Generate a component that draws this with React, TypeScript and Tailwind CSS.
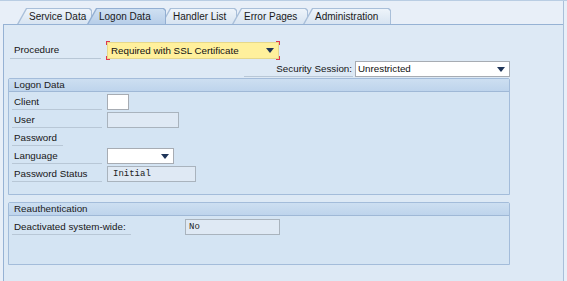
const tabs = ["Service Data", "Logon Data", "Handler List", "Error Pages", "Administration"];
const tabWidths = [75, 79, 76, 76, 88];

function Arrow() {
  return (
    <svg width="8" height="5" viewBox="0 0 8 5" className="shrink-0">
      <path d="M0 0h8L4 5z" fill="#1f3559" />
    </svg>
  );
}

function Tab({ label, width, active }: { label: string; width: number; active: boolean }) {
  const shape = "polygon(9px 0, calc(100% - 2px) 0, 100% 2px, 100% 100%, 0 100%)";
  return (
    <div
      className={`relative -ml-[5px] first:ml-0 h-[16px] ${active ? "z-10 bg-[#93afd2]" : "bg-[#a9bfd9]"}`}
      style={{ width, clipPath: shape }}
    >
      <div
        className={`h-full mx-[1px] mt-[1px] flex items-center pl-[11px] ${
          active ? "bg-gradient-to-b from-[#cfe0f2] to-[#b6cde8]" : "bg-gradient-to-b from-[#eef4fa] to-[#d6e3f1]"
        }`}
        style={{ clipPath: shape }}
      >
        <span className="text-[10px] text-[#1a1a1a] leading-none">{label}</span>
      </div>
    </div>
  );
}

function Label({ text, w = 90, line = true }: { text: string; w?: number; line?: boolean }) {
  return (
    <div
      className={`h-full flex items-center pl-[2px] shrink-0 ${line ? "border-b border-[#b8c7d6]" : ""}`}
      style={{ width: w }}
    >
      <span className="text-[9.8px] text-[#161616] leading-none">{text}</span>
    </div>
  );
}

function Corner({ pos }: { pos: string }) {
  return <span className={`absolute w-[4px] h-[4px] border-[#e0374f] ${pos}`} />;
}

function Group({ title, children, className }: { title: string; children: React.ReactNode; className?: string }) {
  return (
    <div className={`ml-[4px] w-[502px] border border-[#a3bcda] rounded-t-[2px] bg-[#d4e4f3] ${className ?? ""}`}>
      <div className="h-[13px] bg-gradient-to-b from-[#cddff1] to-[#bed4ec] border-b border-[#9fb8d6] flex items-center pl-[5px]">
        <span className="text-[9.8px] text-[#1a1a1a] leading-none">{title}</span>
      </div>
      {children}
    </div>
  );
}

export default function App() {
  return (
    <div
      className="w-[567px] h-[281px] overflow-hidden bg-[#e8eff8] border-t border-[#b9cde3]"
      style={{ fontFamily: '"Liberation Sans", Arial, sans-serif' }}
    >
      <div className="w-[564px] h-full border-r border-[#a9bfd9] flex flex-col">
        {/* tab strip */}
        <div className="h-[23px] flex items-end pl-[17px] pt-[7px]">
          {tabs.map((t, i) => (
            <Tab key={t} label={t} width={tabWidths[i]} active={i === 1} />
          ))}
        </div>

        {/* panel */}
        <div className="flex-1 ml-[3px] border-l border-t border-[#96b2d4] bg-[#dde9f5] pt-[17px]">
          <div className="flex h-[17px] items-stretch pl-[6px]">
            <div className="w-[91px] h-full border-b border-[#b8c7d6] flex items-center pl-[4px] shrink-0">
              <span className="text-[9.8px] text-[#161616] leading-none">Procedure</span>
            </div>
            <div className="relative ml-[6px] w-[172px] h-[17px] bg-[#fff09c] border border-[#e6d88a] flex items-center justify-between pl-[3px] pr-[4px]">
              <span className="text-[9.8px] text-[#111] leading-none">Required with SSL Certificate</span>
              <Arrow />
              <Corner pos="-left-[2px] -top-[2px] border-l border-t" />
              <Corner pos="-right-[2px] -top-[2px] border-r border-t" />
              <Corner pos="-left-[2px] -bottom-[2px] border-l border-b" />
              <Corner pos="-right-[2px] -bottom-[2px] border-r border-b" />
            </div>
          </div>

          <div className="flex h-[16px] mt-[2px] pl-[240px]">
            <div className="w-[109px] h-full border-b border-[#b8c7d6] flex items-center justify-end pr-[1px]">
              <span className="text-[9.8px] text-[#161616] leading-none">Security Session:</span>
            </div>
            <div className="ml-[2px] w-[155px] h-[16px] bg-white border border-[#a7acb3] flex items-center justify-between pl-[2px] pr-[4px]">
              <span className="text-[9.8px] text-[#111] leading-none">Unrestricted</span>
              <Arrow />
            </div>
          </div>

          <Group title="Logon Data" className="mt-[1px] h-[117px]">
            <div className="pt-[2px] flex flex-col gap-[2px] pl-[3px]">
              <div className="flex h-[16px]">
                <Label text="Client" />
                <div className="ml-[5px] w-[22px] h-[16px] bg-white border border-[#a7acb3]" />
              </div>
              <div className="flex h-[16px]">
                <Label text="User" />
                <div className="ml-[5px] w-[72px] h-[16px] bg-[#dfe9f4] border border-[#a9b3bd]" />
              </div>
              <div className="flex h-[16px]">
                <Label text="Password" w={51} />
              </div>
              <div className="flex h-[16px]">
                <Label text="Language" />
                <div className="ml-[5px] w-[67px] h-[16px] bg-white border border-[#a7acb3] flex items-center justify-end pr-[4px]">
                  <Arrow />
                </div>
              </div>
              <div className="flex h-[16px]">
                <Label text="Password Status" />
                <div className="ml-[5px] w-[89px] h-[16px] bg-[#dfe9f4] border border-[#a9b3bd] flex items-center pl-[5px]">
                  <span className="text-[9px] text-[#222] leading-none" style={{ fontFamily: '"Liberation Mono", monospace' }}>
                    Initial
                  </span>
                </div>
              </div>
            </div>
          </Group>

          <Group title="Reauthentication" className="mt-[7px] h-[63px]">
            <div className="pt-[3px] pl-[3px]">
              <div className="flex h-[16px]">
                <Label text="Deactivated system-wide:" w={119} />
                <div className="ml-[54px] w-[95px] h-[16px] bg-[#dfe9f4] border border-[#a9b3bd] flex items-center pl-[3px]">
                  <span className="text-[9px] text-[#222] leading-none" style={{ fontFamily: '"Liberation Mono", monospace' }}>
                    No
                  </span>
                </div>
              </div>
            </div>
          </Group>
        </div>
      </div>
    </div>
  );
}
